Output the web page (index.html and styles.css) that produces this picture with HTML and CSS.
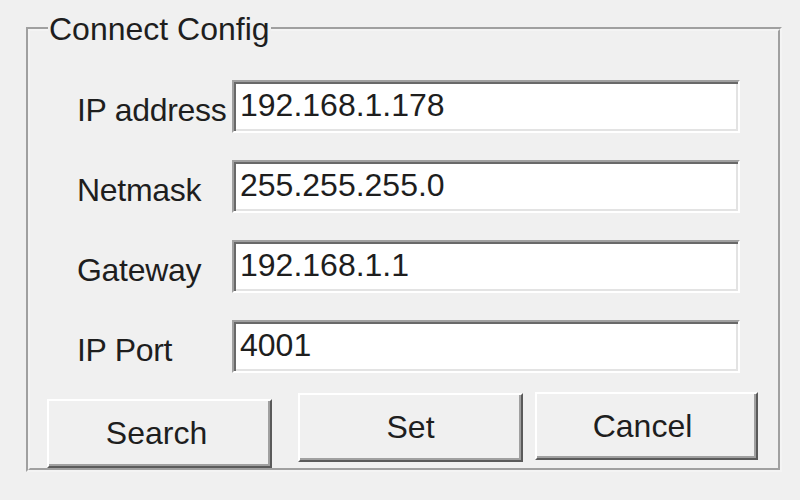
FILE: index.html
```html
<!DOCTYPE html>
<html>
<head>
<meta charset="utf-8">
<title>Connect Config</title>
<link rel="stylesheet" href="styles.css">
</head>
<body>
<fieldset class="group">
  <legend class="group-title">Connect Config</legend>
  <div class="fields">
    <label class="field-label">IP address</label>
    <input class="field-input" type="text" value="192.168.1.178">
    <label class="field-label">Netmask</label>
    <input class="field-input" type="text" value="255.255.255.0">
    <label class="field-label">Gateway</label>
    <input class="field-input" type="text" value="192.168.1.1">
    <label class="field-label">IP Port</label>
    <input class="field-input" type="text" value="4001">
  </div>
  <div class="actions">
    <button class="btn btn-search" type="button">Search</button>
    <button class="btn btn-set" type="button">Set</button>
    <button class="btn btn-cancel" type="button">Cancel</button>
  </div>
</fieldset>
</body>
</html>
```

FILE: styles.css
```css
html, body {
  margin: 0;
  padding: 0;
}

body {
  background: #f0f0f0;
  font-family: "Liberation Sans", Arial, sans-serif;
  font-size: 32px;
  color: #1e1e1e;
  height: 500px;
  overflow: hidden;
}

.group {
  box-sizing: border-box;
  width: 756px;
  min-width: 0;
  margin: 11px 0 0 26px;
  padding: 0;
  border: 4px groove #f4f4f4;
}

.group-title {
  margin-left: 18px;
  padding: 0 1px;
  font-size: 32px;
  line-height: 36px;
}

.fields {
  display: grid;
  grid-template-columns: 155px 508px;
  row-gap: 27px;
  margin-top: 33px;
  padding-left: 47px;
}

.field-label {
  box-sizing: border-box;
  height: 53px;
  display: flex;
  align-items: center;
  padding-top: 8px;
  white-space: nowrap;
  letter-spacing: -0.3px;
}

.field-input {
  box-sizing: border-box;
  width: 508px;
  height: 53px;
  margin: 0;
  padding: 0 4px 2px 6px;
  border: 2px solid;
  border-color: #a0a0a0 #ffffff #ffffff #a0a0a0;
  box-shadow: inset 2px 2px 0 #696969, inset -2px -2px 0 #e3e3e3;
  background: #ffffff;
  font-family: "Liberation Sans", Arial, sans-serif;
  font-size: 32px;
  color: #1e1e1e;
  outline: none;
}

.actions {
  display: flex;
  align-items: flex-start;
  margin-top: 20px;
  padding-left: 17px;
}

.btn {
  box-sizing: border-box;
  width: 225px;
  height: 69px;
  margin: 0;
  padding: 0;
  background: #f0f0f0;
  border: 2px solid;
  border-color: #ffffff #5a5a5a #5a5a5a #ffffff;
  box-shadow: inset -2px -2px 0 #a0a0a0;
  font-family: "Liberation Sans", Arial, sans-serif;
  font-size: 32px;
  color: #1e1e1e;
}

.btn-search {
  margin-top: 6px;
  padding-right: 6px;
}

.btn-set {
  margin-left: 26px;
}

.btn-cancel {
  width: 223px;
  height: 68px;
  margin-left: 12px;
  margin-top: -1px;
  padding-right: 8px;
}
```
